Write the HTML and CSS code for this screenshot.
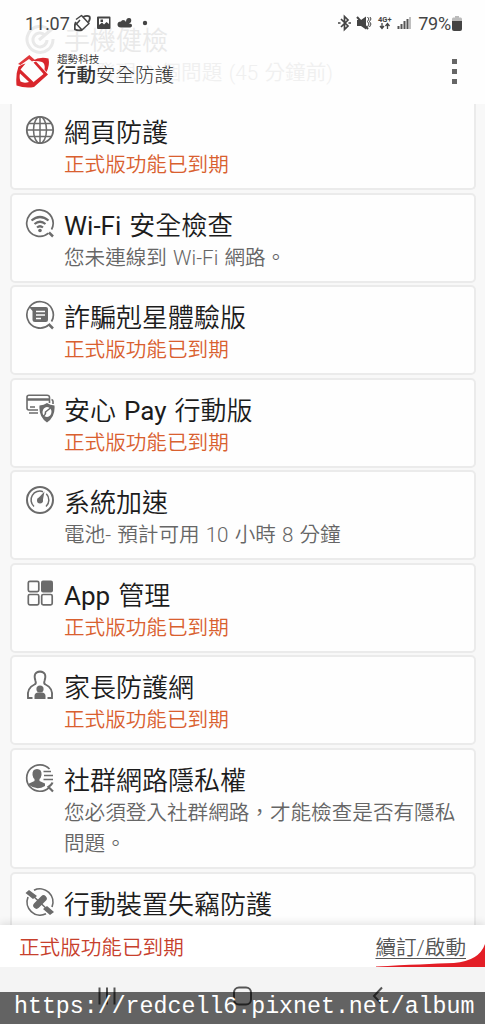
FILE: index.html
```html
<!DOCTYPE html>
<html lang="zh-Hant">
<head>
<meta charset="utf-8">
<title>行動安全防護</title>
<link rel="stylesheet" href="styles.css">
</head>
<body>
<div class="phone">
  <header class="top">
    <div class="ghost" aria-hidden="true">
      <svg class="ghost-icon" viewBox="0 0 30 30"><path d="M24 5A13 13 0 1 0 28 14M20 10A7 7 0 1 0 22 15M14 15L27 4" fill="none" stroke="currentColor" stroke-width="3"/></svg>
      <div class="ghost-title">手機健檢</div>
      <div class="ghost-sub">發現 3 個問題 (45 分鐘前)</div>
    </div>
    <div class="status">
      <span class="time">11:07</span>
      <svg class="s-icons" width="80" height="18" viewBox="0 0 80 18">
        <g fill="none" stroke="#444" stroke-linejoin="round"><path d="M2 5.500L7.500 1.500L15 9.500L8 16L2.500 10L6 6" stroke-width="1.500"/><path d="M9 3Q13 1 15.500 2.500Q16.500 5 14.500 8M2 8Q0 12 1 15.500Q4 17 8 16" stroke-width="1.900"/></g>
        <path fill="#444" fill-rule="evenodd" d="M24 2.500H35.500Q36.500 2.500 36.500 3.500V14Q36.500 15 35.500 15H24Q23 15 23 14V3.500Q23 2.500 24 2.500ZM25 11L28 8.500L30 10.500L32.500 8L35 10V4.500H25ZM26.500 5.500H29V8H26.500Z"/>
        <path fill="#444" d="M47 13.500Q43.500 13.500 43.500 10.500Q43.500 7.500 47 7.500Q48 5 51 6.500L52 8Q52 4 55 4Q58 4 57 8L55 10Q58 9 58 11.500Q58 13.500 55 13.500Z"/>
        <circle cx="71" cy="9" r="2.200" fill="#444"/>
      </svg>
      <svg class="s-right" width="74" height="18" viewBox="0 0 74 18">
        <path d="M3 5L10 12L6.500 15.500V2.500L10 6L3 13M0 9H2.500M10.500 9H13" fill="none" stroke="#444" stroke-width="1.700"/>
        <path d="M19 6H23L28 2.500V15.500L23 12H19Z" fill="#444"/><path d="M19 3L30 15" stroke="#444" stroke-width="2"/><path d="M29.500 3L31 5L29.500 7.500L31 10L29.500 13M32 3L33 5L31.500 7.500L33 10L31.500 13" fill="none" stroke="#444"/>
        <text x="40" y="8" class="net">4G+</text>
        <path d="M44 9V14M42 12L44 14.500L46 12M49.500 15V10M47.500 12L49.500 9.500L51.500 12" fill="none" stroke="#444" stroke-width="1.300"/>
        <path d="M60.500 15V12M63.500 15V10M66.500 15V7M69.500 15V5" stroke="#555" stroke-width="2"/><path d="M72 15V3" stroke="#aaa" stroke-width="1.500"/>
      </svg>
      <span class="pct">79%</span>
      <svg class="batt" width="10" height="15" viewBox="0 0 10 15"><path d="M3 0H7V1.500H9Q10 2 10 3V6H0V3Q0 2 1 1.500H3Z" fill="#bbb"/><path d="M0 5H10V13Q10 15 8 15H2Q0 15 0 13Z" fill="#444"/></svg>
    </div>
    <div class="appbar">
      <svg class="logo" width="34" height="34" viewBox="0 0 34 34">
        <path d="M2 10L13.300 1L19 6L16 7.500L13 5L4.500 11Z" fill="#e0383c"/>
        <path d="M16 7Q24 2 32.500 4.500Q34 11 30.500 18L28.500 15.500Q29.500 9.500 26 8Q22 6.500 16 7Z" fill="#d9262c"/>
        <path d="M20 7.500L32 20.500L18 33L14 31L27.500 20L17.500 8.500Z" fill="#d9262c"/>
        <path d="M2.500 12.500Q-0.500 20 0.500 31.500Q9 34.500 18 33L17.500 28L4.500 15.500L9.500 9.500L6.500 10.500ZM4 19.500L13 28Q8 29.500 4.500 27.500Q3 24 4 19.500Z" fill="#d9262c"/>
      </svg>
      <div class="brand"><div class="brand-s">趨勢科技</div><div class="brand-l"><b>行動</b>安全防護</div></div>
      <div class="dots"><i></i><i></i><i></i></div>
    </div>
  </header>

  <main class="list">
    <section class="card">
      <svg class="ic" viewBox="0 0 30 30"><g fill="none" stroke="#6b6b6b" stroke-width="1.500"><circle cx="15" cy="15" r="13.200" stroke-width="1.800"/><ellipse cx="15" cy="15" rx="6.500" ry="13.200"/><path d="M15 2V28M2 15H28M4 8.500H26M4 21.500H26"/></g></svg>
      <div><h2>網頁防護</h2><p class="due">正式版功能已到期</p></div>
    </section>
    <section class="card">
      <svg class="ic" viewBox="0 0 30 30"><g fill="none" stroke="#6b6b6b"><path d="M23.500 25.200A13.200 13.200 0 1 1 26.500 21.500" stroke-width="1.700"/><path d="M24 24.500L28 28.500" stroke-width="2.500"/><path d="M6.500 12.500Q15 5.500 23.500 12.500M9.500 16Q15 11.500 20.500 16M12 19.500Q15 17 18 19.500" stroke-width="2.200"/></g><circle cx="15" cy="22.500" r="1.800" fill="#6b6b6b"/></svg>
      <div><h2><span class="latin">Wi-Fi</span> 安全檢查</h2><p>您未連線到 Wi-Fi 網路。</p></div>
    </section>
    <section class="card">
      <svg class="ic" viewBox="0 0 30 30"><path d="M24 24.600A13.200 13.200 0 1 1 26.500 21.500" fill="none" stroke="#6b6b6b" stroke-width="1.700"/><path d="M23.500 24L28 28.500" stroke="#6b6b6b" stroke-width="2.500"/><path d="M4 7H21Q23 7 23 9V20Q23 22 21 22H10Q7.500 22 7.500 19.500V11Z" fill="#6b6b6b"/><path d="M11 11.500H20M11 15H20M11 18.500H16" stroke="#fff" stroke-width="1.500"/></svg>
      <div><h2>詐騙剋星體驗版</h2><p class="due">正式版功能已到期</p></div>
    </section>
    <section class="card">
      <svg class="ic" viewBox="0 0 30 30"><g fill="none" stroke="#6b6b6b" stroke-width="1.600"><path d="M13 17H4Q2 17 2 15V4Q2 2.300 4 2.300H22Q24.500 2.300 24.500 4.500V10"/><path d="M2 6.500H24.500" stroke-width="2.500"/><path d="M5 14H10M4 20H13M26.500 6.500Q28 7 28 8.500V11"/></g><path d="M22 10Q25 12 29.500 12.500Q30.500 24 22 29.500Q13.500 24 14.500 12.500Q19 12 22 10Z" fill="#6b6b6b"/><path d="M22 14Q26.500 14.500 26.500 19Q26 23.500 22 24Q17.500 23.500 17.500 19Q18 14.500 22 14Z" fill="#fff"/><path d="M18 23.500Q21 21.500 20.500 19L25.500 15" fill="none" stroke="#6b6b6b" stroke-width="1.500"/></svg>
      <div><h2>安心 <span class="latin">Pay</span> 行動版</h2><p class="due">正式版功能已到期</p></div>
    </section>
    <section class="card">
      <svg class="ic" viewBox="0 0 30 30"><g fill="none" stroke="#6b6b6b"><circle cx="15" cy="15" r="13" stroke-width="2"/><path d="M9 21.500A8.800 8.800 0 0 1 18 6.700M21.300 8.800A8.800 8.800 0 0 1 21 21.500" stroke-width="1.500"/></g><circle cx="15" cy="15.500" r="3" fill="#6b6b6b"/><path d="M19.500 6.500L12.500 14L17.500 17Z" fill="#6b6b6b"/></svg>
      <div><h2>系統加速</h2><p>電池- 預計可用 10 小時 8 分鐘</p></div>
    </section>
    <section class="card">
      <svg class="ic" viewBox="0 0 30 30"><g fill="none" stroke="#6b6b6b" stroke-width="1.700"><rect x="3.300" y="3.300" width="10.500" height="10.300" rx="1.500"/><rect x="3.300" y="16.500" width="10.500" height="10.300" rx="1.500"/><rect x="16.700" y="16.500" width="10.500" height="10.300" rx="1.500"/></g><rect x="16" y="2.500" width="12" height="12" rx="2" fill="#6b6b6b"/></svg>
      <div><h2><span class="latin">App</span> 管理</h2><p class="due">正式版功能已到期</p></div>
    </section>
    <section class="card">
      <svg class="ic" viewBox="0 0 30 30"><path d="M7.500 28H3Q1.500 18 9.500 14.500Q11.500 13.500 10.500 11Q7.500 2 15 1.500Q22.500 2 19.500 11Q18.500 13.500 20.500 14.500Q28.500 18 27 28H22.500" fill="none" stroke="#6b6b6b" stroke-width="1.900"/><circle cx="15" cy="19" r="3.600" fill="#6b6b6b"/><path d="M9.500 29V26Q9.500 23 12.500 22.500H17.500Q20.500 23 20.500 26V29Z" fill="#6b6b6b"/></svg>
      <div><h2>家長防護網</h2><p class="due">正式版功能已到期</p></div>
    </section>
    <section class="card tall">
      <svg class="ic" viewBox="0 0 30 30"><path d="M24 24.600A13.200 13.200 0 1 1 24.500 6" fill="none" stroke="#6b6b6b" stroke-width="1.700"/><path d="M27.500 19.500Q27 21.500 23.500 24L28 28.500" fill="none" stroke="#6b6b6b" stroke-width="2.200"/><path d="M12 6Q17 6 16.500 12Q16 15 14.500 16V18L20 20.500V23Q12 28 4 22V20.500L9.500 18V16Q8 15 7.500 12Q7 6 12 6Z" fill="#6b6b6b"/><path d="M18.500 8.500H26M19 12.500H28M18.500 16.500H28" stroke="#6b6b6b" stroke-width="1.600"/></svg>
      <div><h2>社群網路隱私權</h2><p>您必須登入社群網路，才能檢查是否有隱私問題。</p></div>
    </section>
    <section class="card">
      <svg class="ic" viewBox="0 0 30 30"><path d="M9 3.200A13.200 13.200 0 0 1 27 20M21 26.800A13.200 13.200 0 0 1 3 10" fill="none" stroke="#6b6b6b" stroke-width="1.700"/><path d="M5 6L25 25" stroke="#6b6b6b" stroke-width="1.500"/><path d="M4 3L12 9L8 12L0.500 6Z M22 19L29 25L25 28L18 22Z" fill="#6b6b6b"/><path d="M11.500 18.500L18.500 11.500" stroke="#6b6b6b" stroke-width="6.500" stroke-linecap="round"/></svg>
      <div><h2>行動裝置失竊防護</h2></div>
    </section>
  </main>

  <footer class="renew">
    <svg class="curve" width="109" height="23" viewBox="0 0 112 23" preserveAspectRatio="none"><path d="M0 22.500Q50 20 80 19Q106 17 112 0V23H0Z" fill="#e31e26"/></svg>
    <span class="expired">正式版功能已到期</span>
    <a class="link">續訂/啟動</a>
  </footer>
  <div class="nav">
    <svg width="485" height="57" viewBox="0 0 485 57"><g fill="none" stroke="#555" stroke-width="2"><path d="M99.500 20.500V37.500M107 20.500V37.500M114.500 20.500V37.500"/><rect x="234" y="20.500" width="17" height="17" rx="5"/><path d="M382 20.500L374 29L382 37.500"/></g></svg>
    <div class="mark">https://redcell6.pixnet.net/album</div>
  </div>
</div>
</body>
</html>
```
FILE: styles.css
```css
* { box-sizing: border-box; }
body {
  margin: 0;
  font-family: Roboto, "Noto Sans CJK TC", sans-serif;
  font-weight: 350;
  background: #fafafa;
}
.phone {
  width: 485px;
  height: 1024px;
  display: flex;
  flex-direction: column;
  overflow: hidden;
}
.top {
  position: relative;
  height: 104px;
  flex: none;
  background: #fefefe;
}
.ghost { position: absolute; left: 64px; top: 24px; color: #e9e9e9; white-space: nowrap; }
.ghost-icon { position: absolute; left: -39px; top: 1px; width: 30px; height: 30px; }
.ghost-title { font-size: 26px; line-height: 34px; }
.ghost-sub { font-size: 20.600px; line-height: 31px; padding-left: 31px; word-spacing: 1.400px; color: #f0f0f0; }
.status {
  position: relative;
  display: flex;
  align-items: center;
  height: 46px;
  padding: 0 23px 0 25px;
  color: #444;
  font-size: 18px;
  font-weight: 400;
}
.time { width: 43px; }
.s-icons { margin-left: 6px; }
.s-right { margin-left: auto; margin-right: 6px; }
.net { font: 700 7.500px Roboto, sans-serif; fill: #444; }
.pct { margin-right: 1px; letter-spacing: -0.2px; }
.appbar {
  position: relative;
  display: flex;
  align-items: center;
  height: 50px;
  padding: 0 28px 0 16px;
}
.brand { margin-left: 7px; color: #333; }
.brand-s { font-size: 10.600px; line-height: 10px; }
.brand-l { font-size: 19.500px; line-height: 22px; font-weight: 300; }
.brand-l b { font-weight: 500; }
.dots { margin-left: auto; display: flex; flex-direction: column; gap: 5px; }
.dots i { width: 5px; height: 5px; background: #666; }
.list {
  flex: none;
  height: 821px;
  padding: 0 9.500px 0 9.500px;
  display: flex;
  flex-direction: column;
  gap: 2.500px;
  overflow: hidden;
  background: #f8f8f8;
}
.card {
  flex: none;
  height: 90px;
  display: flex;
  padding: 13px 14px 0 13.500px;
  background: #fefefe;
  border: 2px solid #ebebeb;
  border-radius: 5px;
}
.card:first-child { height: 86px; padding-top: 11px; border-top: 0; border-radius: 0 0 5px 5px; }
.tall { height: 121.500px; }
.ic { flex: none; width: 30px; height: 30px; margin-right: 9px; }
h2 { margin: 1px 0 0; font-size: 26px; line-height: 34px; font-weight: 350; word-spacing: 1.700px; color: #1c1c1c; white-space: nowrap; }
.latin { font-weight: 400; }
p { margin: -1px 0 0; padding-top: 1px; font-size: 20.600px; line-height: 31px; word-spacing: 1.100px; color: #666; }
.due { color: #d9602f; }
.renew {
  position: relative;
  z-index: 1;
  flex: none;
  height: 42px;
  display: flex;
  justify-content: space-between;
  align-items: center;
  padding: 0 19px;
  background: #fff;
  box-shadow: 0 -2px 8px #0000001c;
  font-size: 20.600px;
}
.curve { position: absolute; right: 0; bottom: 0; }
.expired { color: #c7402c; }
.link { position: relative; color: #555; text-decoration: underline; text-decoration-thickness: 1px; text-underline-offset: 3px; }
.nav { position: relative; z-index: 1; height: 57px; background: #f4f4f4; }
.mark {
  position: absolute;
  left: 0;
  right: 0;
  bottom: 0;
  height: 32px;
  padding-left: 14px;
  background: #00000098;
  color: #fff;
  font: 23.250px/31px "Liberation Mono", monospace;
}
.nav svg { display: block; }
```
